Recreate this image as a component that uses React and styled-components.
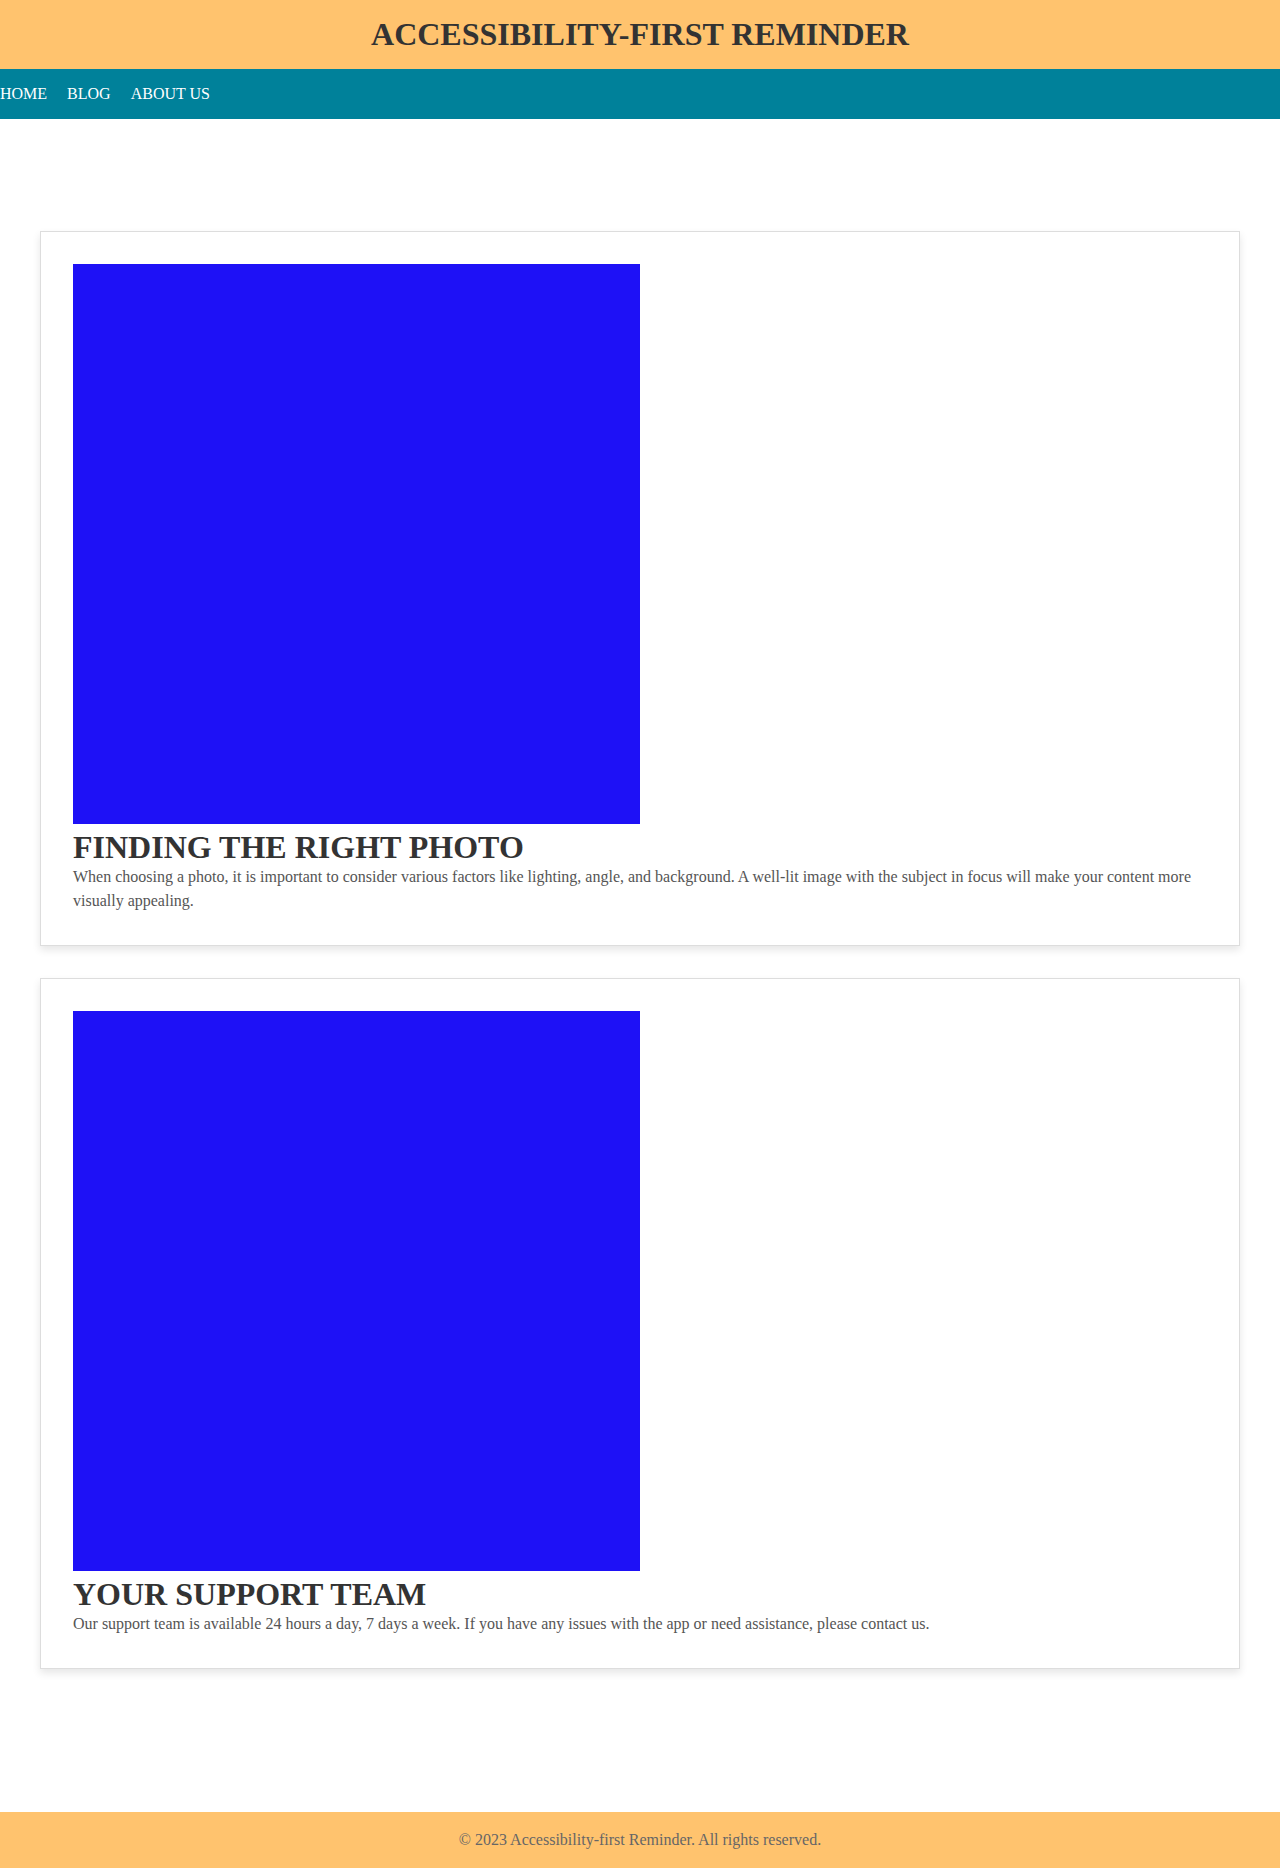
import React from "react";
import styled, { createGlobalStyle } from "styled-components";

const GlobalStyle = createGlobalStyle`
  html, body {
    margin: 0;
    padding: 0;
    background: #ffffff;
    font-family: "Liberation Serif", "Times New Roman", serif;
  }
`;

const Page = styled.div`
  display: flex;
  flex-direction: column;
  min-height: 1868px;
`;

const Header = styled.header`
  background: #ffc36e;
  padding: 16px 0;
  text-align: center;
`;

const Title = styled.h1`
  margin: 0;
  font-size: 32px;
  line-height: 37px;
  font-weight: bold;
  color: #333333;
  text-transform: uppercase;
`;

const Nav = styled.nav`
  background: #00819a;
  padding: 16px 0;
`;

const NavList = styled.ul`
  display: flex;
  gap: 20px;
  margin: 0;
  padding: 0;
  list-style: none;
`;

const NavLink = styled.a`
  color: #ffffff;
  text-decoration: none;
  font-size: 16px;
  line-height: 18px;
  text-transform: uppercase;
`;

const Main = styled.main`
  flex: 1;
  display: flex;
  flex-direction: column;
  gap: 32px;
  padding: 112px 40px 130px;
`;

const Card = styled.article`
  border: 1px solid #dddddd;
  box-shadow: 0 4px 8px rgba(0, 0, 0, 0.1);
  padding: 32px;
  background: #ffffff;
`;

const Photo = styled.div`
  width: 567px;
  height: 560px;
  background: #1e11f6;
  margin-bottom: 5px;
`;

const CardTitle = styled.h2`
  margin: 0;
  font-size: 32px;
  line-height: 36px;
  font-weight: bold;
  color: #333333;
  text-transform: uppercase;
`;

const CardText = styled.p`
  margin: 0;
  font-size: 16px;
  line-height: 24px;
  color: #555555;
`;

const Footer = styled.footer`
  background: #ffc36e;
  padding: 16px 0;
  text-align: center;
  color: #666666;
  font-size: 16px;
  line-height: 24px;
`;

const posts = [
  {
    title: "Finding the right photo",
    text:
      "When choosing a photo, it is important to consider various factors like lighting, angle, and background. A well-lit image with the subject in focus will make your content more visually appealing.",
  },
  {
    title: "Your support team",
    text:
      "Our support team is available 24 hours a day, 7 days a week. If you have any issues with the app or need assistance, please contact us.",
  },
];

export default function App() {
  return (
    <>
      <GlobalStyle />
      <Page>
        <Header>
          <Title>Accessibility-first Reminder</Title>
        </Header>
        <Nav>
          <NavList>
            <li><NavLink href="#">Home</NavLink></li>
            <li><NavLink href="#">Blog</NavLink></li>
            <li><NavLink href="#">About Us</NavLink></li>
          </NavList>
        </Nav>
        <Main>
          {posts.map((p) => (
            <Card key={p.title}>
              <Photo role="img" aria-label={p.title} />
              <CardTitle>{p.title}</CardTitle>
              <CardText>{p.text}</CardText>
            </Card>
          ))}
        </Main>
        <Footer>© 2023 Accessibility-first Reminder. All rights reserved.</Footer>
      </Page>
    </>
  );
}
